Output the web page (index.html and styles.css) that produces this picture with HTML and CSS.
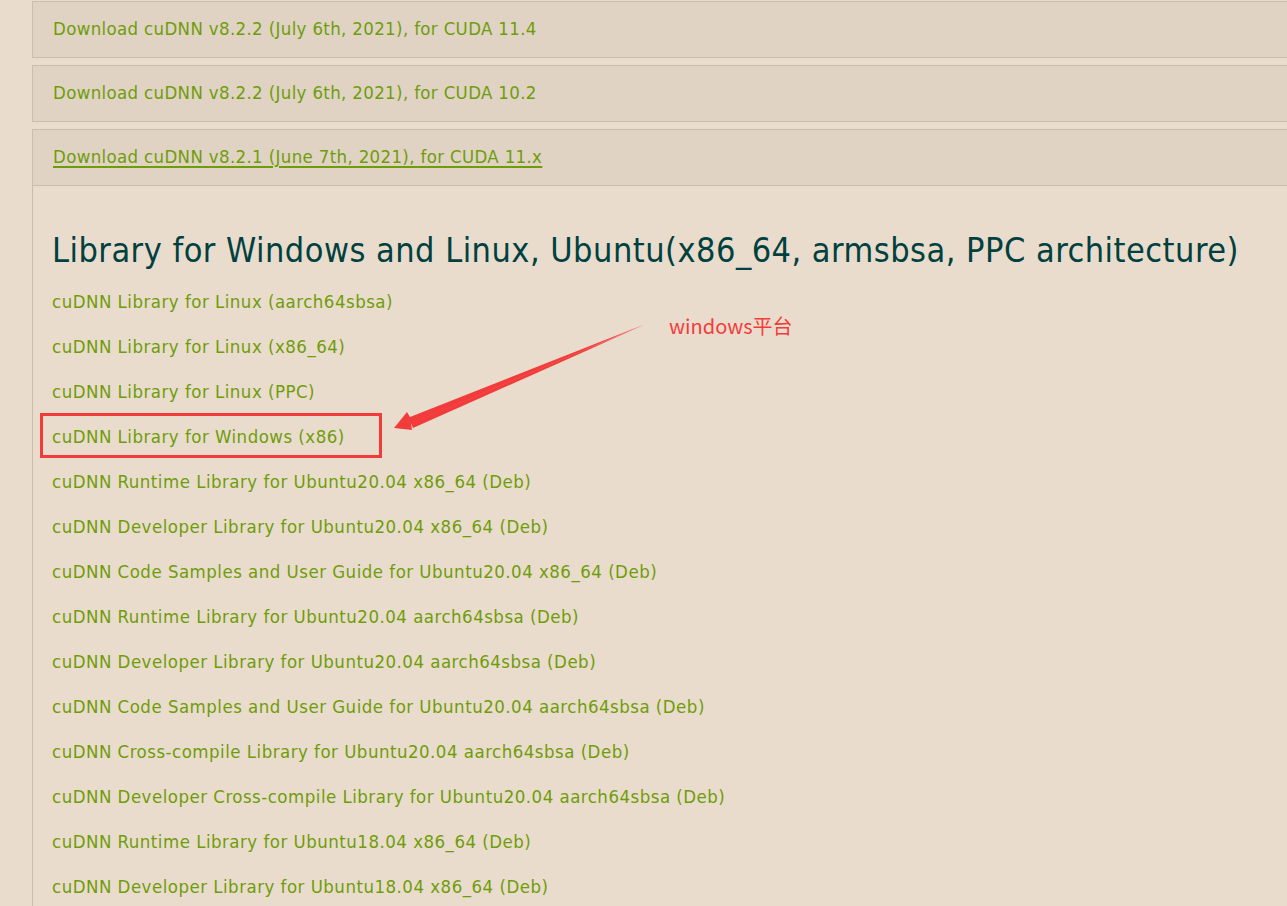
FILE: index.html
```html
<!DOCTYPE html>
<html lang="en">
<head>
<meta charset="utf-8">
<title>cuDNN Archive</title>
<link rel="stylesheet" href="styles.css">
</head>
<body>
<div class="page">
  <div class="panel"><a class="panel-link" href="#">Download cuDNN v8.2.2 (July 6th, 2021), for CUDA 11.4</a></div>
  <div class="panel"><a class="panel-link" href="#">Download cuDNN v8.2.2 (July 6th, 2021), for CUDA 10.2</a></div>
  <div class="panel"><a class="panel-link active" href="#">Download cuDNN v8.2.1 (June 7th, 2021), for CUDA 11.x</a></div>
  <section class="content">
    <h2 class="heading">Library for Windows and Linux, Ubuntu(x86_64, armsbsa, PPC architecture)</h2>
    <ul class="files">
      <li class="file"><a href="#">cuDNN Library for Linux (aarch64sbsa)</a></li>
      <li class="file"><a href="#">cuDNN Library for Linux (x86_64)</a></li>
      <li class="file"><a href="#">cuDNN Library for Linux (PPC)</a></li>
      <li class="file marked"><a href="#">cuDNN Library for Windows (x86)</a></li>
      <li class="file"><a href="#">cuDNN Runtime Library for Ubuntu20.04 x86_64 (Deb)</a></li>
      <li class="file"><a href="#">cuDNN Developer Library for Ubuntu20.04 x86_64 (Deb)</a></li>
      <li class="file"><a href="#">cuDNN Code Samples and User Guide for Ubuntu20.04 x86_64 (Deb)</a></li>
      <li class="file"><a href="#">cuDNN Runtime Library for Ubuntu20.04 aarch64sbsa (Deb)</a></li>
      <li class="file"><a href="#">cuDNN Developer Library for Ubuntu20.04 aarch64sbsa (Deb)</a></li>
      <li class="file"><a href="#">cuDNN Code Samples and User Guide for Ubuntu20.04 aarch64sbsa (Deb)</a></li>
      <li class="file"><a href="#">cuDNN Cross-compile Library for Ubuntu20.04 aarch64sbsa (Deb)</a></li>
      <li class="file"><a href="#">cuDNN Developer Cross-compile Library for Ubuntu20.04 aarch64sbsa (Deb)</a></li>
      <li class="file"><a href="#">cuDNN Runtime Library for Ubuntu18.04 x86_64 (Deb)</a></li>
      <li class="file"><a href="#">cuDNN Developer Library for Ubuntu18.04 x86_64 (Deb)</a></li>
    </ul>
  </section>
  <div class="note">
    <svg class="arrow" width="300" height="140" viewBox="0 0 300 140" xmlns="http://www.w3.org/2000/svg">
      <defs>
        <linearGradient id="fade" x1="1" y1="0" x2="0" y2="1">
          <stop offset="0" stop-color="#f23c3c" stop-opacity="0.25"/>
          <stop offset="0.25" stop-color="#f23c3c" stop-opacity="1"/>
        </linearGradient>
      </defs>
      <polygon fill="url(#fade)" points="263,25 31,123.5 33,128 263,25.5"/>
      <polygon fill="#f23c3c" points="263,25 30,117 27,112 14,128 32,130 31,124"/>
    </svg>
    <span class="note-text">windows平台</span>
  </div>
</div>
</body>
</html>
```

FILE: styles.css
```css
html, body {
  margin: 0;
  padding: 0;
}
body {
  background: #eadccd;
  overflow: hidden;
  font-family: "DejaVu Sans Condensed", "Liberation Sans", sans-serif;
}
.page {
  position: relative;
  padding: 1px 0 0 32px;
  width: 1400px;
}
.panel {
  display: flex;
  align-items: center;
  height: 53px;
  padding: 0 0 2px 20px;
  margin-bottom: 7px;
  background: #e0d3c4;
  border: 1px solid #cabdb0;
  border-right: none;
}
.panel-link {
  color: #6f9d0a;
  font-size: 18.5px;
  letter-spacing: 0.34px;
  text-decoration: none;
}
.panel-link.active {
  text-decoration: underline;
  text-decoration-thickness: 2px;
  text-underline-offset: 3px;
}
.panel:last-of-type {
  margin-bottom: 0;
}
.content {
  margin-top: -7px;
  border-left: 1px solid #cabdb0;
  padding: 44px 0 0 19px;
}
.heading {
  margin: 0 0 9px;
  height: 40px;
  line-height: 40px;
  font-size: 34px;
  font-weight: 500;
  letter-spacing: 0.47px;
  color: #00413f;
  white-space: nowrap;
}
.files {
  list-style: none;
  margin: 0;
  padding: 0;
}
.file {
  height: 45px;
  line-height: 45px;
  position: relative;
}
.file a {
  color: #6f9d0a;
  font-size: 18.5px;
  letter-spacing: 0.48px;
  text-decoration: none;
}
.file.marked::before {
  content: "";
  position: absolute;
  left: -12px;
  top: -1px;
  width: 336px;
  height: 39px;
  border: 3px solid #f23c3c;
}
.note {
  position: absolute;
  left: 380px;
  top: 300px;
  width: 430px;
  height: 140px;
}
.arrow {
  position: absolute;
  left: 0;
  top: 0;
}
.note-text {
  position: absolute;
  left: 289px;
  top: 12px;
  font-family: "Noto Sans CJK SC", sans-serif;
  font-size: 20px;
  color: #f23c3c;
  line-height: 28px;
}
```
